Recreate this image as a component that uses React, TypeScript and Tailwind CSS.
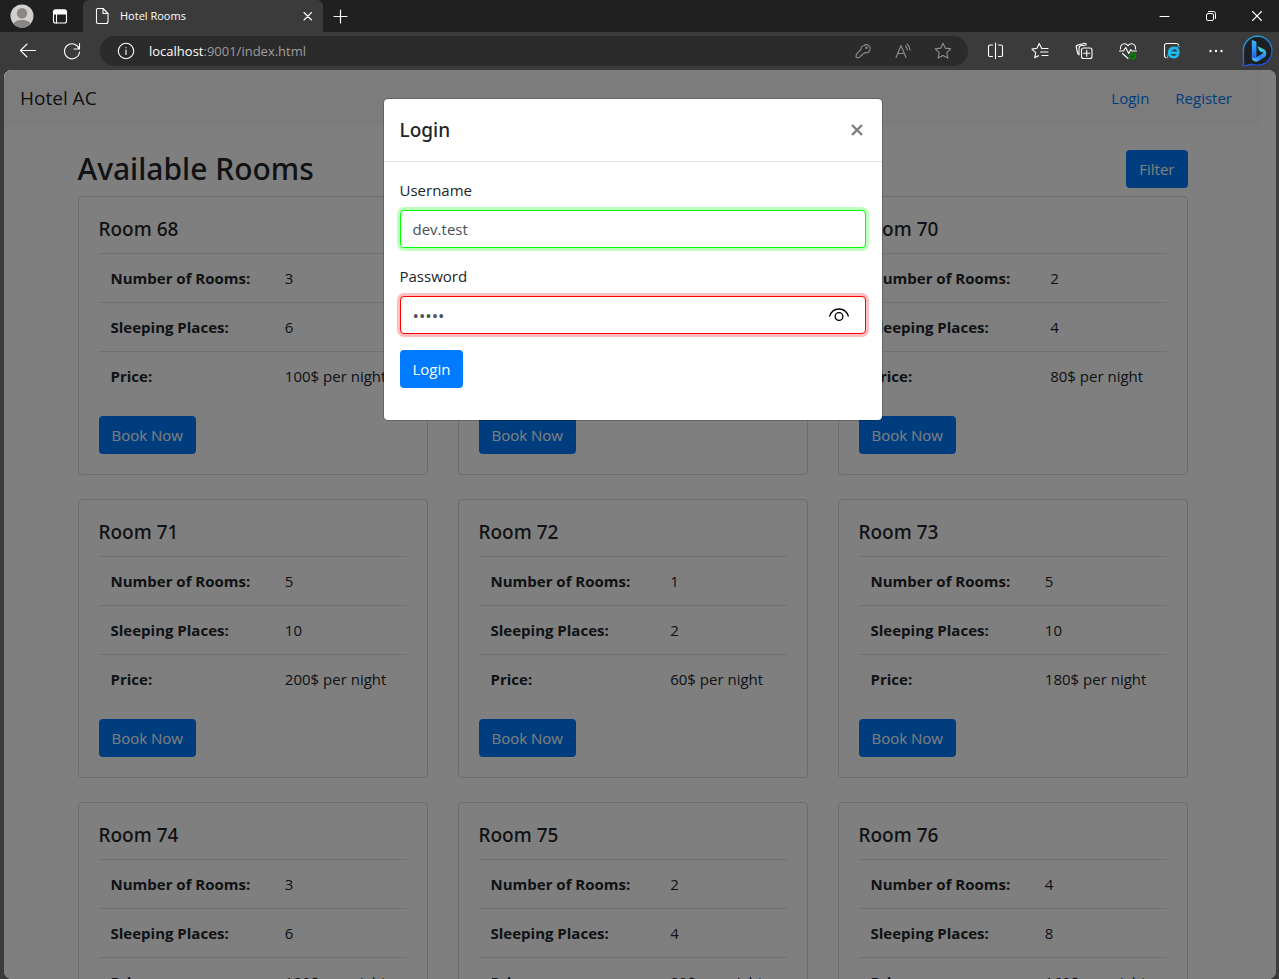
import React, { useState } from "react";

type Room = { id: number; rooms: number; places: number; price: number };

const rooms: Room[] = [
  { id: 68, rooms: 3, places: 6, price: 100 },
  { id: 69, rooms: 1, places: 2, price: 60 },
  { id: 70, rooms: 2, places: 4, price: 80 },
  { id: 71, rooms: 5, places: 10, price: 200 },
  { id: 72, rooms: 1, places: 2, price: 60 },
  { id: 73, rooms: 5, places: 10, price: 180 },
  { id: 74, rooms: 3, places: 6, price: 120 },
  { id: 75, rooms: 2, places: 4, price: 80 },
  { id: 76, rooms: 4, places: 8, price: 160 },
];

const primaryButton =
  "h-[38px] rounded-[4px] bg-[#007bff] px-[13px] text-[15px] leading-6 text-white";

const headingFont = "font-['Noto_Sans','Open_Sans',sans-serif] font-medium";

function Icon({ children, className = "" }: { children: React.ReactNode; className?: string }) {
  return (
    <svg
      viewBox="0 0 20 20"
      className={`h-5 w-5 shrink-0 ${className}`}
      fill="none"
      stroke="currentColor"
      strokeWidth="1.1"
      strokeLinecap="round"
      strokeLinejoin="round"
      aria-hidden="true"
    >
      {children}
    </svg>
  );
}

const starPath =
  "M10 2.2l2.35 4.95 5.4.7-3.95 3.75 1 5.4L10 14.4 5.2 17l1-5.4L2.25 7.85l5.4-.7z";

function BingLogo() {
  return (
    <svg viewBox="0 0 32 32" className="h-8 w-8 shrink-0" aria-hidden="true">
      <defs>
        <linearGradient id="bingRing" x1="0" y1="0" x2="0.4" y2="1">
          <stop offset="0" stopColor="#1fb6e8" />
          <stop offset="1" stopColor="#1c50d8" />
        </linearGradient>
        <linearGradient id="bingStem" x1="0" y1="0" x2="0" y2="1">
          <stop offset="0" stopColor="#37bdff" />
          <stop offset="1" stopColor="#1f5be8" />
        </linearGradient>
        <linearGradient id="bingBowl" x1="0" y1="0.8" x2="1" y2="0.3">
          <stop offset="0" stopColor="#4cc4fa" />
          <stop offset="0.6" stopColor="#2a7df2" />
          <stop offset="1" stopColor="#2fa9f0" />
        </linearGradient>
        <linearGradient id="bingPetal" x1="0" y1="0" x2="1" y2="1">
          <stop offset="0" stopColor="#45e6d0" />
          <stop offset="1" stopColor="#2ba4f3" />
        </linearGradient>
      </defs>
      <path
        d="M15.500 1.200a14.500 14.500 0 1 1 0 29c-2.200 0-3.800-.7-5.800-.7-2.800 0-5.300 1-8.500 1.200.9-3 .2-5.800.2-8.700V15.500A14.300 14.300 0 0 1 15.500 1.200z"
        fill="#1d2023"
        stroke="url(#bingRing)"
        strokeWidth="1.300"
      />
      <path d="M9.800 5l3.600 1.300c.6.2 1 .7 1 1.300v14c0 1.700-1 3-2.300 3s-2.300-1-2.300-2.500z" fill="url(#bingStem)" />
      <path d="M9.800 21.500c.5 1.800 2.500 2.200 4.300 1.100l9-5.800c1.700 1.600 1.300 4.200-.6 5.400l-6 3.700c-3.200 2-6.700-.2-6.700-3.400z" fill="url(#bingBowl)" />
      <path d="M15.400 11.300l6 2.700c2.700 1.200 3.500 3.700 2.500 6-.5-1.300-1.500-1.900-2.700-2.400l-3-1.200c-.6-.3-.9-.7-1.200-1.300z" fill="url(#bingPetal)" />
    </svg>
  );
}

function TitleBar() {
  return (
    <div className="flex h-8 items-stretch bg-[#202020] text-white">
      <div className="flex w-[83px] shrink-0 items-center gap-[15px] pl-[10px]">
        <button type="button" aria-label="Profile">
          <svg viewBox="0 0 24 24" className="h-6 w-6" aria-hidden="true">
            <clipPath id="avatar">
              <circle cx="12" cy="12" r="11.500" />
            </clipPath>
            <circle cx="12" cy="12" r="11.500" fill="#d2d0ce" />
            <g clipPath="url(#avatar)" fill="#8a8886">
              <circle cx="12" cy="9.300" r="5.200" />
              <path d="M2.500 24c.5-6 3.500-8 9.500-8s9 2 9.500 8z" />
            </g>
          </svg>
        </button>
        <button type="button" aria-label="Tab actions">
          <Icon>
            <rect x="4.500" y="4" width="13" height="13" rx="2" />
            <path d="M4.500 8V6a2 2 0 0 1 2-2h9a2 2 0 0 1 2 2v2z" fill="currentColor" />
            <path d="M7.500 8v9" />
          </Icon>
        </button>
      </div>
      <div className="flex w-60 items-center rounded-t-[6px] bg-[#3b3b3b] pl-[9px] pr-[5px]">
        <Icon>
          <path d="M5.500 2.500h5.500l5 5v8a2 2 0 0 1-2 2H6a1.500 1.500 0 0 1-1.500-1.500V4a1.500 1.500 0 0 1 1.500-1.500z" />
          <path d="M11 2.500V7.500h5" />
        </Icon>
        <span className="ml-2 flex-1 text-[11px] leading-4">Hotel Rooms</span>
        <button type="button" aria-label="Close tab">
          <Icon>
            <path d="M6 6.500l7.500 7.500M13.500 6.500L6 14" />
          </Icon>
        </button>
      </div>
      <button type="button" aria-label="New tab" className="ml-[7px]">
        <Icon>
          <path d="M10.500 4v13M4 10.500h13" strokeWidth="1.200" />
        </Icon>
      </button>
      <div className="ml-auto flex">
        <button type="button" aria-label="Minimize" className="grid w-[46px] place-items-center">
          <Icon>
            <path d="M6 10.500h9" strokeWidth="1" />
          </Icon>
        </button>
        <button type="button" aria-label="Restore" className="grid w-[46px] place-items-center">
          <Icon>
            <rect x="6.500" y="7.500" width="7" height="7" rx="1.500" strokeWidth="1" />
            <path d="M8.500 5.500h5a2 2 0 0 1 2 2v5" strokeWidth="1" />
          </Icon>
        </button>
        <button type="button" aria-label="Close" className="grid w-[46px] place-items-center">
          <Icon>
            <path d="M6.500 5.500l9 9M15.500 5.500l-9 9" strokeWidth="1.100" />
          </Icon>
        </button>
      </div>
    </div>
  );
}

function Toolbar() {
  return (
    <div className="flex h-[38px] items-center bg-[#3b3b3b] pl-[18px] pr-[5px] text-white">
      <button type="button" aria-label="Back">
        <Icon>
          <path d="M17.500 9.500h-15M9 3L2.500 9.500 9 16" />
        </Icon>
      </button>
      <button type="button" aria-label="Refresh" className="ml-6">
        <Icon>
          <path d="M17 7.500A7.500 7.500 0 1 0 17.500 11M17.500 2.500v5.500H12" />
        </Icon>
      </button>
      <div className="ml-[18px] flex h-[30px] flex-1 items-center rounded-full bg-[#2b2b2b] pl-4 pr-[15px]">
        <Icon>
          <circle cx="10" cy="10" r="7.700" />
          <path d="M10 9v4.500M10 6.500v.2" />
        </Icon>
        <span className="ml-[13px] flex-1 text-[13px] leading-5 text-[#9d9d9d]">
          <span className="text-white">localhost</span>:9001/index.html
        </span>
        <div className="flex gap-5 text-[#8f8f8f]">
          <button type="button" aria-label="Passwords">
            <Icon>
              <path d="M12.500 3.500a4.200 4.200 0 1 1-.8 8.200l-1 1-1.400.3-.3 1.600-1.500.2-.8 1.400-2.400.6c-.9 0-1.500-.6-1.300-1.500l.4-2 4.400-4.600a4.200 4.200 0 0 1 3.700-4.200z" />
              <circle cx="13.500" cy="6.800" r=".7" />
            </Icon>
          </button>
          <button type="button" aria-label="Read aloud">
            <Icon>
              <path d="M3 16.500L8 4.500l5 12M4.700 12.500h6.600M12.500 5a5 5 0 0 1 1.700 4M14 3a8 8 0 0 1 3 6" />
            </Icon>
          </button>
          <button type="button" aria-label="Add to favorites">
            <Icon>
              <path d={starPath} />
            </Icon>
          </button>
        </div>
      </div>
      <div className="ml-[18px] flex gap-6">
        <button type="button" aria-label="Split screen">
          <Icon>
            <path d="M6.500 4H4a1.500 1.500 0 0 0-1.500 1.500v9A1.500 1.500 0 0 0 4 15.500h2.500M12.500 4H15a1.500 1.500 0 0 1 1.500 1.500v9a1.500 1.500 0 0 1-1.500 1h-2.500M9.500 2v15.500" />
          </Icon>
        </button>
        <button type="button" aria-label="Favorites">
          <Icon>
            <path d="M11.500 7L9.200 2.500 7 7.300l-5 .8 3.700 3.500-1 5.200 3.800-2.100M11.500 7.500h6.500M10.500 11h7.500M12 14.500h6" />
          </Icon>
        </button>
        <button type="button" aria-label="Collections">
          <Icon>
            <rect x="7.500" y="7" width="10.500" height="10.500" rx="2" />
            <path d="M12.700 9.300v6M9.700 12.300h6M5 13.500c-.8-.2-1.200-.7-1.400-1.500L2.300 6.500a2 2 0 0 1 1.400-2.400L10 2.500a2 2 0 0 1 2.400 1.400M5 14V7.500a3 3 0 0 1 3-3h3" />
          </Icon>
        </button>
        <button type="button" aria-label="Browser essentials">
          <Icon>
            <path d="M2.500 8C1.800 5 4 2.700 6.500 2.700 8.500 2.700 10 4.700 10 4.700s1.500-2 3.500-2c2.500 0 4.700 2.300 4 5.300M1.500 10h4L7.700 6.500l3 6 2-4 1.200 1.500h4.600M4.500 12.500l5.500 5" />
            <circle cx="14.500" cy="15" r="3.800" fill="#0f7a0f" stroke="none" />
            <path d="M13 15l1.200 1.200 2-2.200" stroke="#0a4f0a" />
          </Icon>
        </button>
        <button type="button" aria-label="Internet Explorer mode">
          <Icon>
            <path d="M4 16.800a2 2 0 0 1-1.500-1.800V4.500a2 2 0 0 1 2-2h10a2 2 0 0 1 2 1.500" />
            <path d="M7.300 11.700h9.200c.2-3-1.700-4.900-4.600-4.900-3 0-4.800 2-4.800 4.800 0 2.700 1.800 4.600 4.600 4.600 1.800 0 3.300-.8 4-2.300" stroke="#1ebbee" strokeWidth="2.600" />
            <path d="M5.800 17c-1.500-2 4-10 11.700-11.500" stroke="#1ebbee" />
          </Icon>
        </button>
        <button type="button" aria-label="Settings and more">
          <Icon>
            <g fill="currentColor" stroke="none">
              <circle cx="4.500" cy="10" r="1.200" />
              <circle cx="10" cy="10" r="1.200" />
              <circle cx="15.500" cy="10" r="1.200" />
            </g>
          </Icon>
        </button>
      </div>
      <button type="button" aria-label="Bing chat" className="ml-4">
        <BingLogo />
      </button>
    </div>
  );
}

function RoomCard({ room }: { room: Room }) {
  const details: [string, string][] = [
    ["Number of Rooms:", String(room.rooms)],
    ["Sleeping Places:", String(room.places)],
    ["Price:", `${room.price}$ per night`],
  ];
  return (
    <article className="rounded-[4px] border border-black/15 p-5">
      <h5 className={`mb-3 text-[19px] leading-6 ${headingFont}`}>Room {room.id}</h5>
      <table className="mb-4 w-full text-left text-[15px] leading-6">
        <tbody>
          {details.map(([label, value]) => (
            <tr key={label} className="border-t border-[#dee2e6]">
              <th scope="row" className="p-3 font-bold">
                {label}
              </th>
              <td className="p-3">{value}</td>
            </tr>
          ))}
        </tbody>
      </table>
      <button type="button" className={primaryButton}>
        Book Now
      </button>
    </article>
  );
}

function LoginDialog() {
  const [username, setUsername] = useState("dev.test");
  const [password, setPassword] = useState("12345");
  const [visible, setVisible] = useState(false);
  const field =
    "block h-[38px] w-full rounded-[4px] border bg-white px-3 leading-6 text-[#495057] outline-none";
  return (
    <div
      role="dialog"
      aria-labelledby="login-title"
      className="w-[500px] rounded-[5px] border border-black/20 bg-white bg-clip-padding"
    >
      <div className="flex items-start justify-between border-b border-[#dee2e6] p-4">
        <h5 id="login-title" className={`text-[19px] leading-[30px] ${headingFont}`}>
          Login
        </h5>
        <button type="button" aria-label="Close" className="grid h-[30px] w-[18px] place-items-center text-[#7f7f7f]">
          <svg viewBox="0 0 12 12" className="h-3 w-3" stroke="currentColor" strokeWidth="2.400" aria-hidden="true">
            <path d="M1 1l10 10M11 1L1 11" />
          </svg>
        </button>
      </div>
      <form className="p-4 pb-8" onSubmit={(e) => e.preventDefault()}>
        <label htmlFor="username" className="mb-2 block text-[15px] leading-6">
          Username
        </label>
        <input
          id="username"
          value={username}
          onChange={(e) => setUsername(e.target.value)}
          className={`${field} border-[#00ff00] text-[15px] shadow-[0_0_0_3px_rgba(0,255,0,0.25)]`}
        />
        <label htmlFor="password" className="mb-2 mt-4 block text-[15px] leading-6">
          Password
        </label>
        <div className="relative">
          <input
            id="password"
            type={visible ? "text" : "password"}
            value={password}
            onChange={(e) => setPassword(e.target.value)}
            className={`${field} border-[#ff0000] shadow-[0_0_0_3px_rgba(255,0,0,0.25)] ${visible ? "text-[15px]" : "text-[17px]"}`}
          />
          <button
            type="button"
            aria-label="Show password"
            onClick={() => setVisible(!visible)}
            className="absolute inset-y-0 right-4 grid place-items-center text-black"
          >
            <svg viewBox="0 0 22 20" className="h-5 w-[22px]" fill="none" stroke="currentColor" strokeWidth="1.300" aria-hidden="true">
              <path d="M1.500 11.500C3 6.800 6.500 4 11 4s8 2.800 9.500 7.500" />
              <circle cx="11" cy="11.500" r="3.900" />
            </svg>
          </button>
        </div>
        <button type="submit" className={`${primaryButton} mt-4 block`}>
          Login
        </button>
      </form>
    </div>
  );
}

export default function App() {
  return (
    <div className="flex h-screen flex-col overflow-hidden bg-[#3b3b3b] font-['Open_Sans','Noto_Sans',sans-serif]">
      <TitleBar />
      <Toolbar />
      <div className="relative ml-1 mr-[3px] min-h-0 flex-1 overflow-hidden rounded-[8px] bg-white pr-[15px] text-[#212529]">
        <nav className="flex h-14 items-center bg-[#f8f9fa] px-4">
          <a href="#home" className="text-[19px] leading-[30px] text-black/90">
            Hotel AC
          </a>
          <div className="ml-auto flex gap-[26px] pr-[13px] text-[15px] leading-6 text-[#007bff]">
            <a href="#login">Login</a>
            <a href="#register">Register</a>
          </div>
        </nav>
        <main className="mx-auto mt-6 max-w-[1140px] px-[15px]">
          <div className="flex items-start justify-between pb-2">
            <h2 className={`text-[30px] leading-[38px] ${headingFont}`}>Available Rooms</h2>
            <button type="button" className={primaryButton}>
              Filter
            </button>
          </div>
          <div className="grid grid-cols-3 gap-x-[30px] gap-y-6">
            {rooms.map((room) => (
              <RoomCard key={room.id} room={room} />
            ))}
          </div>
        </main>
        <div className="absolute inset-0 flex items-start justify-center bg-black/50 pr-[15px] pt-7">
          <LoginDialog />
        </div>
      </div>
    </div>
  );
}
